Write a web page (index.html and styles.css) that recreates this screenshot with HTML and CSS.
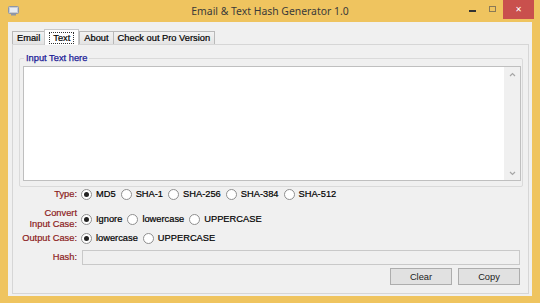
FILE: index.html
```html
<!DOCTYPE html>
<html lang="en">
<head>
    <meta charset="UTF-8">
    <title>Email &amp; Text Hash Generator 1.0</title>
    <link rel="stylesheet" href="styles.css">
</head>
<body>
    <div class="window">
        <div class="titlebar">
            <div class="app-icon">
                <svg width="11" height="11" viewBox="0 0 11 11">
                    <rect x="0.5" y="1.5" width="10" height="7" rx="1" fill="#c9ccd3" stroke="#8e96a6"/>
                    <rect x="2" y="3" width="7" height="4" fill="#e8ecf2"/>
                    <rect x="3" y="9" width="5" height="1.5" fill="#8e96a6"/>
                </svg>
            </div>
            <div class="title">Email &amp; Text Hash Generator 1.0</div>
            <div class="controls">
                <span class="btn-min"></span>
                <span class="btn-max"></span>
                <span class="btn-close">&#x2715;</span>
            </div>
        </div>

        <div class="client">
            <div class="tabs">
                <div class="tab">Email</div>
                <div class="tab active"><span class="focus">Text</span></div>
                <div class="tab">About</div>
                <div class="tab">Check out Pro Version</div>
            </div>

            <div class="page">
                <fieldset class="group">
                    <legend>Input Text here</legend>
                    <div class="textbox">
                        <div class="text-area"></div>
                        <div class="vscroll">
                            <svg width="7" height="5" viewBox="0 0 7 5"><path d="M1 4 L3.5 1.5 L6 4" fill="none" stroke="#a6a6a6" stroke-width="1.2"/></svg>
                            <svg width="7" height="5" viewBox="0 0 7 5"><path d="M1 1 L3.5 3.5 L6 1" fill="none" stroke="#a6a6a6" stroke-width="1.2"/></svg>
                        </div>
                    </div>
                </fieldset>

                <div class="row row-type">
                    <div class="lbl">Type:</div>
                    <label class="opt"><input type="radio" name="type" checked>MD5</label>
                    <label class="opt"><input type="radio" name="type">SHA-1</label>
                    <label class="opt"><input type="radio" name="type">SHA-256</label>
                    <label class="opt"><input type="radio" name="type">SHA-384</label>
                    <label class="opt"><input type="radio" name="type">SHA-512</label>
                </div>

                <div class="row row-convert">
                    <div class="lbl">Convert<br>Input Case:</div>
                    <label class="opt"><input type="radio" name="incase" checked>Ignore</label>
                    <label class="opt"><input type="radio" name="incase">lowercase</label>
                    <label class="opt"><input type="radio" name="incase">UPPERCASE</label>
                </div>

                <div class="row row-output">
                    <div class="lbl">Output Case:</div>
                    <label class="opt"><input type="radio" name="outcase" checked>lowercase</label>
                    <label class="opt"><input type="radio" name="outcase">UPPERCASE</label>
                </div>

                <div class="row row-hash">
                    <div class="lbl">Hash:</div>
                    <div class="hash-box"></div>
                </div>

                <div class="buttons">
                    <button type="button">Clear</button>
                    <button type="button">Copy</button>
                </div>
            </div>
        </div>
    </div>
</body>
</html>
```

FILE: styles.css
```css
body {
    margin: 0;
    padding: 0;
    font-family: "Liberation Sans", Arial, sans-serif;
    font-size: 9.3px;
    color: #000;
}

.window {
    width: 540px;
    height: 303px;
    background-color: #efc45f;
    box-sizing: border-box;
    overflow: hidden;
}

.titlebar {
    height: 22px;
    display: grid;
    grid-template-columns: 1fr auto 1fr;
    align-items: start;
}

.app-icon {
    padding: 5px 0 0 8px;
}

.title {
    font-family: "Noto Sans", "Open Sans", sans-serif;
    font-size: 10.4px;
    color: #3a3a3a;
    line-height: 23px;
}

.controls {
    justify-self: end;
    display: flex;
    align-items: flex-start;
    margin-right: 6px;
}

.btn-min {
    width: 7px;
    height: 2px;
    background-color: #333;
    margin-top: 10px;
}

.btn-max {
    width: 5px;
    height: 4px;
    border: 1px solid #8a7a56;
    margin: 6px 0 0 13px;
}

.btn-close {
    width: 31px;
    height: 19px;
    margin-left: 7px;
    background-color: #c9504d;
    color: #fff;
    font-size: 8px;
    line-height: 19px;
    text-align: center;
    font-family: "DejaVu Sans", sans-serif;
}

.client {
    margin: 0 8px;
    height: 274px;
    background-color: #f0f0f0;
    padding-top: 8px;
    box-sizing: border-box;
}

.tabs {
    display: flex;
    align-items: flex-end;
    padding-left: 4px;
    height: 14px;
}

.tab {
    height: 12px;
    line-height: 12px;
    padding: 0 4px;
    border: 1px solid #b9b9b9;
    border-bottom: none;
    background: linear-gradient(#f2f2f2, #e4e4e4);
    margin-right: -1px;
    -webkit-text-stroke: 0.2px #000;
}

.tab.active {
    height: 15px;
    margin: 0 0 -1px 0;
    padding: 0 4px;
    background: #fff;
    position: relative;
    z-index: 1;
    border-color: #c8c8c8;
}

.tab.active .focus {
    display: inline-block;
    line-height: 10px;
    padding: 0 3px;
    margin-top: 2px;
    border: 1px dotted #333;
}

.page {
    margin: 0 3px 0 4px;
    height: 250px;
    border: 1px solid #d6d6d6;
    box-sizing: border-box;
    padding-top: 8px;
}

.group {
    margin: 0 5px 0 6px;
    padding: 2px 1px 5px 3px;
    border: 1px solid #dadada;
    border-radius: 2px;
}

.group legend {
    color: #1a1a96;
    padding: 0 2px;
    margin-left: 1px;
    line-height: 11px;
    -webkit-text-stroke: 0.25px #1a1a96;
}

.textbox {
    height: 115px;
    border: 1px solid #bfbfbf;
    background-color: #fff;
    display: flex;
    box-sizing: border-box;
}

.text-area {
    flex: 1;
}

.vscroll {
    width: 16px;
    background-color: #f0f0f0;
    display: flex;
    flex-direction: column;
    justify-content: space-between;
    align-items: center;
    padding: 5px 0 4px;
}

.row {
    display: flex;
    align-items: center;
}

.lbl {
    width: 64px;
    margin-right: 4px;
    text-align: right;
    color: #8c1c1c;
    line-height: 11px;
    -webkit-text-stroke: 0.2px #8c1c1c;
}

.opt {
    display: flex;
    align-items: center;
    margin-right: 5px;
    -webkit-text-stroke: 0.2px #000;
}

.opt input {
    appearance: none;
    -webkit-appearance: none;
    width: 11px;
    height: 11px;
    margin: 0 4px 0 0;
    border: 1px solid #8f8f8f;
    border-radius: 50%;
    background-color: #fff;
    box-sizing: border-box;
    display: grid;
    place-content: center;
}

.opt input:checked::before {
    content: "";
    width: 5px;
    height: 5px;
    border-radius: 50%;
    background-color: #222;
}

.row-type {
    height: 14px;
}

.row-convert {
    height: 22px;
    margin-top: 7px;
}

.row-output {
    height: 14px;
    margin-top: 1px;
}

.row-hash {
    height: 15px;
    margin-top: 5px;
}

.hash-box {
    flex: 1;
    height: 15px;
    margin: 0 8px 0 1px;
    border: 1px solid #c9c9c9;
    box-sizing: border-box;
}

.buttons {
    display: flex;
    justify-content: flex-end;
    gap: 6px;
    margin: 3px 8px 0 0;
}

.buttons button {
    width: 62px;
    height: 17px;
    padding: 0;
    font-family: "Liberation Sans", Arial, sans-serif;
    font-size: 9.3px;
    font-weight: normal;
    color: #222;
    background-color: #e1e1e1;
    border: 1px solid #adadad;
}
```
